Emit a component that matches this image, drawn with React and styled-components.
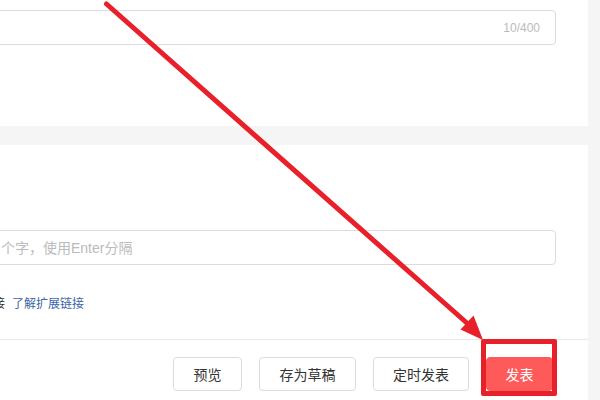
import styled, { createGlobalStyle } from 'styled-components';

const GlobalStyle = createGlobalStyle`
  html, body {
    margin: 0;
    padding: 0;
    background: #f5f5f5;
    overflow: hidden;
  }
  body {
    font-family: "Liberation Sans", "Noto Sans CJK SC", sans-serif;
    color: #333;
  }
`;

const Page = styled.div`
  position: relative;
  width: 600px;
  height: 400px;
  display: flex;
  flex-direction: column;
  gap: 19px;
`;

const Panel = styled.section`
  width: 588px;
  background: #fff;
  box-sizing: border-box;
  display: flex;
  flex-direction: column;
  height: ${p => p.$height}px;
  padding-top: ${p => p.$top}px;
`;

const Field = styled.div`
  display: flex;
  align-items: center;
  justify-content: flex-end;
  height: 35px;
  margin: 0 32px 0 -10px;
  border: 1px solid #dcdcdc;
  border-radius: 4px;
  box-sizing: border-box;
  padding-right: 15px;
`;

const Counter = styled.span`
  font-size: 12px;
  color: #bbb;
  line-height: 16px;
`;

const TagInput = styled.input`
  height: 35px;
  margin: 0 32px 0 -10px;
  border: 1px solid #dcdcdc;
  border-radius: 4px;
  box-sizing: border-box;
  padding: 0 0 0 10px;
  font-family: "Liberation Sans", "Noto Sans CJK SC", sans-serif;
  font-size: 14px;
  outline: none;
  background: #fff;

  &::placeholder {
    color: #bbb;
  }
`;

const LinkRow = styled.div`
  display: flex;
  align-items: center;
  gap: 7px;
  margin-top: 28px;
  font-family: "Noto Sans CJK SC", sans-serif;
  font-size: 12px;
  line-height: 20px;
`;

const Cut = styled.span`
  color: #333;
  margin-left: -7px;
`;

const Link = styled.a`
  color: #3b65a6;
  text-decoration: none;
`;

const Footer = styled.footer`
  width: 588px;
  height: 61px;
  box-sizing: border-box;
  background: #fff;
  border-top: 1px solid #e8e8e8;
  display: flex;
  justify-content: flex-end;
  align-items: flex-start;
  gap: 17px;
  padding: 17px 35px 0 0;
`;

const Button = styled.button`
  width: ${p => p.$w}px;
  height: 34px;
  padding: 0;
  border-radius: 4px;
  box-sizing: border-box;
  font-family: "Noto Sans CJK SC", sans-serif;
  font-size: 14px;
  line-height: 20px;
  border: 1px solid ${p => (p.$primary ? '#ff5a5a' : '#dcdcdc')};
  background: ${p => (p.$primary ? '#ff5a5a' : '#fff')};
  color: ${p => (p.$primary ? '#fff' : '#333')};
  cursor: pointer;
`;

const Highlight = styled.div`
  position: relative;
  display: flex;
`;

const Frame = styled.div`
  position: absolute;
  left: -5px;
  right: -4px;
  top: -18px;
  bottom: -5px;
  border: 5px solid #e8202a;
  border-radius: 2px;
  pointer-events: none;
`;

const Overlay = styled.svg`
  position: absolute;
  left: 0;
  top: 0;
  pointer-events: none;
`;

const App = () => {
  return (
    <>
      <GlobalStyle />
      <Page>
        <Panel $height={126} $top={10}>
          <Field>
            <Counter>10/400</Counter>
          </Field>
        </Panel>
        <div>
          <Panel $height={194} $top={85}>
            <TagInput placeholder="个字，使用Enter分隔" />
            <LinkRow>
              <Cut>接</Cut>
              <Link href="#">了解扩展链接</Link>
            </LinkRow>
          </Panel>
          <Footer>
            <Button $w={69}>预览</Button>
            <Button $w={97}>存为草稿</Button>
            <Button $w={96}>定时发表</Button>
            <Highlight>
              <Button $primary $w={67}>发表</Button>
              <Frame />
            </Highlight>
          </Footer>
        </div>
        <Overlay width="600" height="400" viewBox="0 0 600 400">
          <line x1="106.5" y1="4" x2="468" y2="324" stroke="#e8202a" strokeWidth="5" strokeLinecap="round" />
          <polygon points="483,340 473.5,315.5 460.5,329.5" fill="#e8202a" />
        </Overlay>
      </Page>
    </>
  );
};

export default App;
